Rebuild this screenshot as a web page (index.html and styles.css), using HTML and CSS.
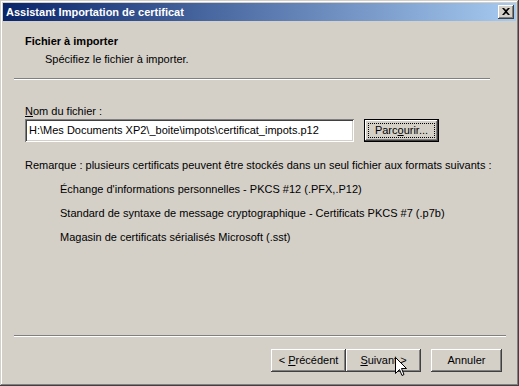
FILE: index.html
```html
<!DOCTYPE html>
<html>
	<head>
		<title>Assistant Importation de certificat</title>
		<link rel="stylesheet" href="styles.css">
	</head>
	<body>
		<div class="window">
			<div class="titlebar">
				<span class="title">Assistant Importation de certificat</span>
				<span class="close">
					<svg width="8" height="7" viewBox="0 0 8 7">
						<path d="M0,0 h2 l2,2 l2,-2 h2 l-3,3.5 l3,3.5 h-2 l-2,-2 l-2,2 h-2 l3,-3.5 z" fill="#000"/>
					</svg>
				</span>
			</div>
			<div class="header">
				<div class="heading">Fichier à importer</div>
				<div class="subheading">Spécifiez le fichier à importer.</div>
			</div>
			<div class="sep top"></div>
			<div class="content">
				<div class="label"><u>N</u>om du fichier :</div>
				<div class="filerow">
					<div class="field">H:\Mes Documents XP2\_boite\impots\certificat_impots.p12</div>
					<div class="btn default"><span class="focus"><span>Parc<u>o</u>urir...</span></span></div>
				</div>
				<div class="note">Remarque : plusieurs certificats peuvent être stockés dans un seul fichier aux formats suivants :</div>
				<ul class="formats">
					<li>Échange d'informations personnelles - PKCS #12 (.PFX,.P12)</li>
					<li>Standard de syntaxe de message cryptographique - Certificats PKCS #7 (.p7b)</li>
					<li>Magasin de certificats sérialisés Microsoft (.sst)</li>
				</ul>
			</div>
			<div class="sep bottom"></div>
			<div class="footer">
				<div class="btn nav"><span>&lt; <u>P</u>récédent</span></div>
				<div class="btn nav"><span><u>S</u>uivant &gt;</span></div>
				<div class="btn cancel"><span>Annuler</span></div>
			</div>
			<svg class="cursor" width="12" height="20" viewBox="0 0 12 20">
				<path d="M0.5,0.5 L0.5,16.5 L4.5,12.5 L7,18.5 L9,17.5 L6.5,11.5 L11.5,11.5 Z" fill="#fff" stroke="#000" stroke-width="1"/>
			</svg>
		</div>
	</body>
</html>
```

FILE: styles.css
```css
body{
	margin:0;
	font-family:"Liberation Sans", Arial, sans-serif;
	font-size:11px;
	color:#000;
	background:#d4d0c8;
}
.window{
	position:relative;
	width:519px;
	height:386px;
	box-sizing:border-box;
	padding:3px;
	background:#d4d0c8;
	box-shadow:inset -1px -1px #404040, inset 1px 1px #d4d0c8, inset -2px -2px #808080, inset 2px 2px #fff;
	display:flex;
	flex-direction:column;
}
.titlebar{
	height:18px;
	display:flex;
	align-items:center;
	padding-left:3px;
	background:linear-gradient(to right, #0a246a, #a6caf0);
}
.title{
	color:#fff;
	font-weight:bold;
	font-size:11px;
}
.close{
	margin-left:auto;
	margin-right:2px;
	width:16px;
	height:14px;
	box-sizing:border-box;
	background:#d4d0c8;
	box-shadow:inset -1px -1px #404040, inset 1px 1px #fff, inset -2px -2px #808080;
	display:flex;
	align-items:center;
	justify-content:center;
	padding-bottom:1px;
}
.header{
	padding:14px 0 0 22px;
}
.heading{
	font-weight:bold;
	line-height:13px;
}
.subheading{
	margin:5px 0 0 20px;
	line-height:13px;
}
.sep{
	border-top:1px solid #808080;
	border-bottom:1px solid #fff;
	height:0;
}
.sep.top{
	margin:12px 26px 0 11px;
}
.sep.bottom{
	margin:auto 10px 0 11px;
}
.content{
	padding:25px 0 0 22px;
}
.label{
	line-height:13px;
}
.filerow{
	display:flex;
	margin-top:1px;
	gap:10px;
}
.field{
	width:329px;
	height:23px;
	box-sizing:border-box;
	background:#fff;
	box-shadow:inset 1px 1px #808080, inset -1px -1px #fff, inset 2px 2px #404040, inset -2px -2px #d4d0c8;
	padding:5px 4px 0;
	line-height:13px;
	white-space:nowrap;
}
.btn{
	height:23px;
	box-sizing:border-box;
	background:#d4d0c8;
	box-shadow:inset -1px -1px #404040, inset 1px 1px #fff, inset -2px -2px #808080, inset 2px 2px #d4d0c8;
	display:flex;
	align-items:center;
	justify-content:center;
	line-height:13px;
}
.btn.default{
	width:75px;
	border:1px solid #000;
	padding:3px;
}
.focus{
	flex:1;
	height:100%;
	box-sizing:border-box;
	border:1px dotted #000;
	display:flex;
	align-items:center;
	justify-content:center;
}
.note{
	margin-top:17px;
	line-height:13px;
}
.formats{
	list-style:none;
	margin:11px 0 0 35px;
	padding:0;
}
.formats li{
	line-height:13px;
	margin-bottom:11px;
}
.footer{
	display:flex;
	justify-content:flex-end;
	padding:12px 14px 11px 0;
}
.btn.nav{
	width:75px;
}
.btn.cancel{
	width:71px;
	margin-left:10px;
}
.cursor{
	position:absolute;
	left:395px;
	top:357px;
}
```
